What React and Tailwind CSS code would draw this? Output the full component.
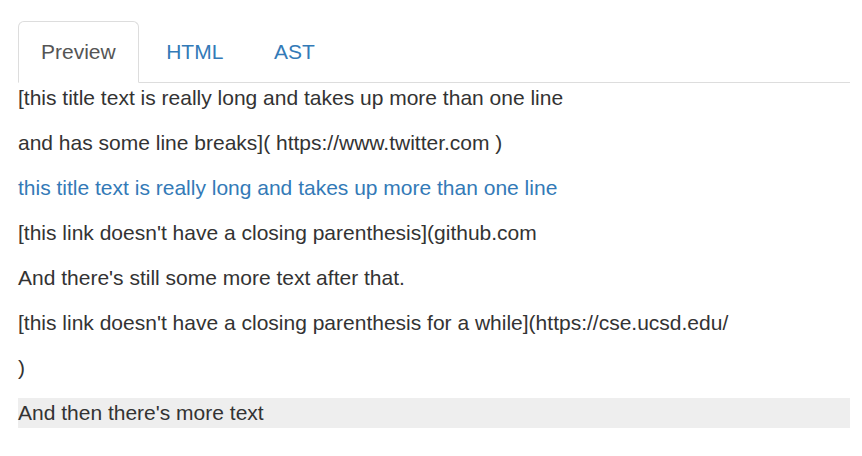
export default function App() {
  const tabBase = "block px-[22px] py-[15px] text-[21px] leading-[30px] border rounded-t-[6px]";
  const p = "text-[21px] leading-[30px] mb-[15px] text-[#333]";
  return (
    <div className="bg-white min-h-[456px] pl-[18px] pr-[12px] pt-[21px]" style={{ fontFamily: '"Liberation Sans", Arial, sans-serif' }}>
      <ul className="flex border-b border-[#ddd]">
        <li className="-mb-px mr-[4.5px]">
          <span className={`${tabBase} border-[#ddd] border-b-transparent bg-white text-[#555]`}>Preview</span>
        </li>
        <li className="-mb-px mr-[4.5px]">
          <span className={`${tabBase} border-transparent text-[#337ab7]`}>HTML</span>
        </li>
        <li className="-mb-px mr-[4.5px]">
          <span className={`${tabBase} border-transparent text-[#337ab7]`}>AST</span>
        </li>
      </ul>
      <div>
        <p className={p}>[this title text is really long and takes up more than one line</p>
        <p className={p}>and has some line breaks]( https://www.twitter.com )</p>
        <p className="text-[21px] leading-[30px] mb-[15px] text-[#337ab7]">this title text is really long and takes up more than one line</p>
        <p className={p}>[this link doesn't have a closing parenthesis](github.com</p>
        <p className={p}>And there's still some more text after that.</p>
        <p className={p}>[this link doesn't have a closing parenthesis for a while](https://cse.ucsd.edu/</p>
        <p className={p}>)</p>
        <p className="text-[21px] leading-[30px] mb-[15px] text-[#333] bg-[#eee]">And then there's more text</p>
      </div>
    </div>
  );
}
